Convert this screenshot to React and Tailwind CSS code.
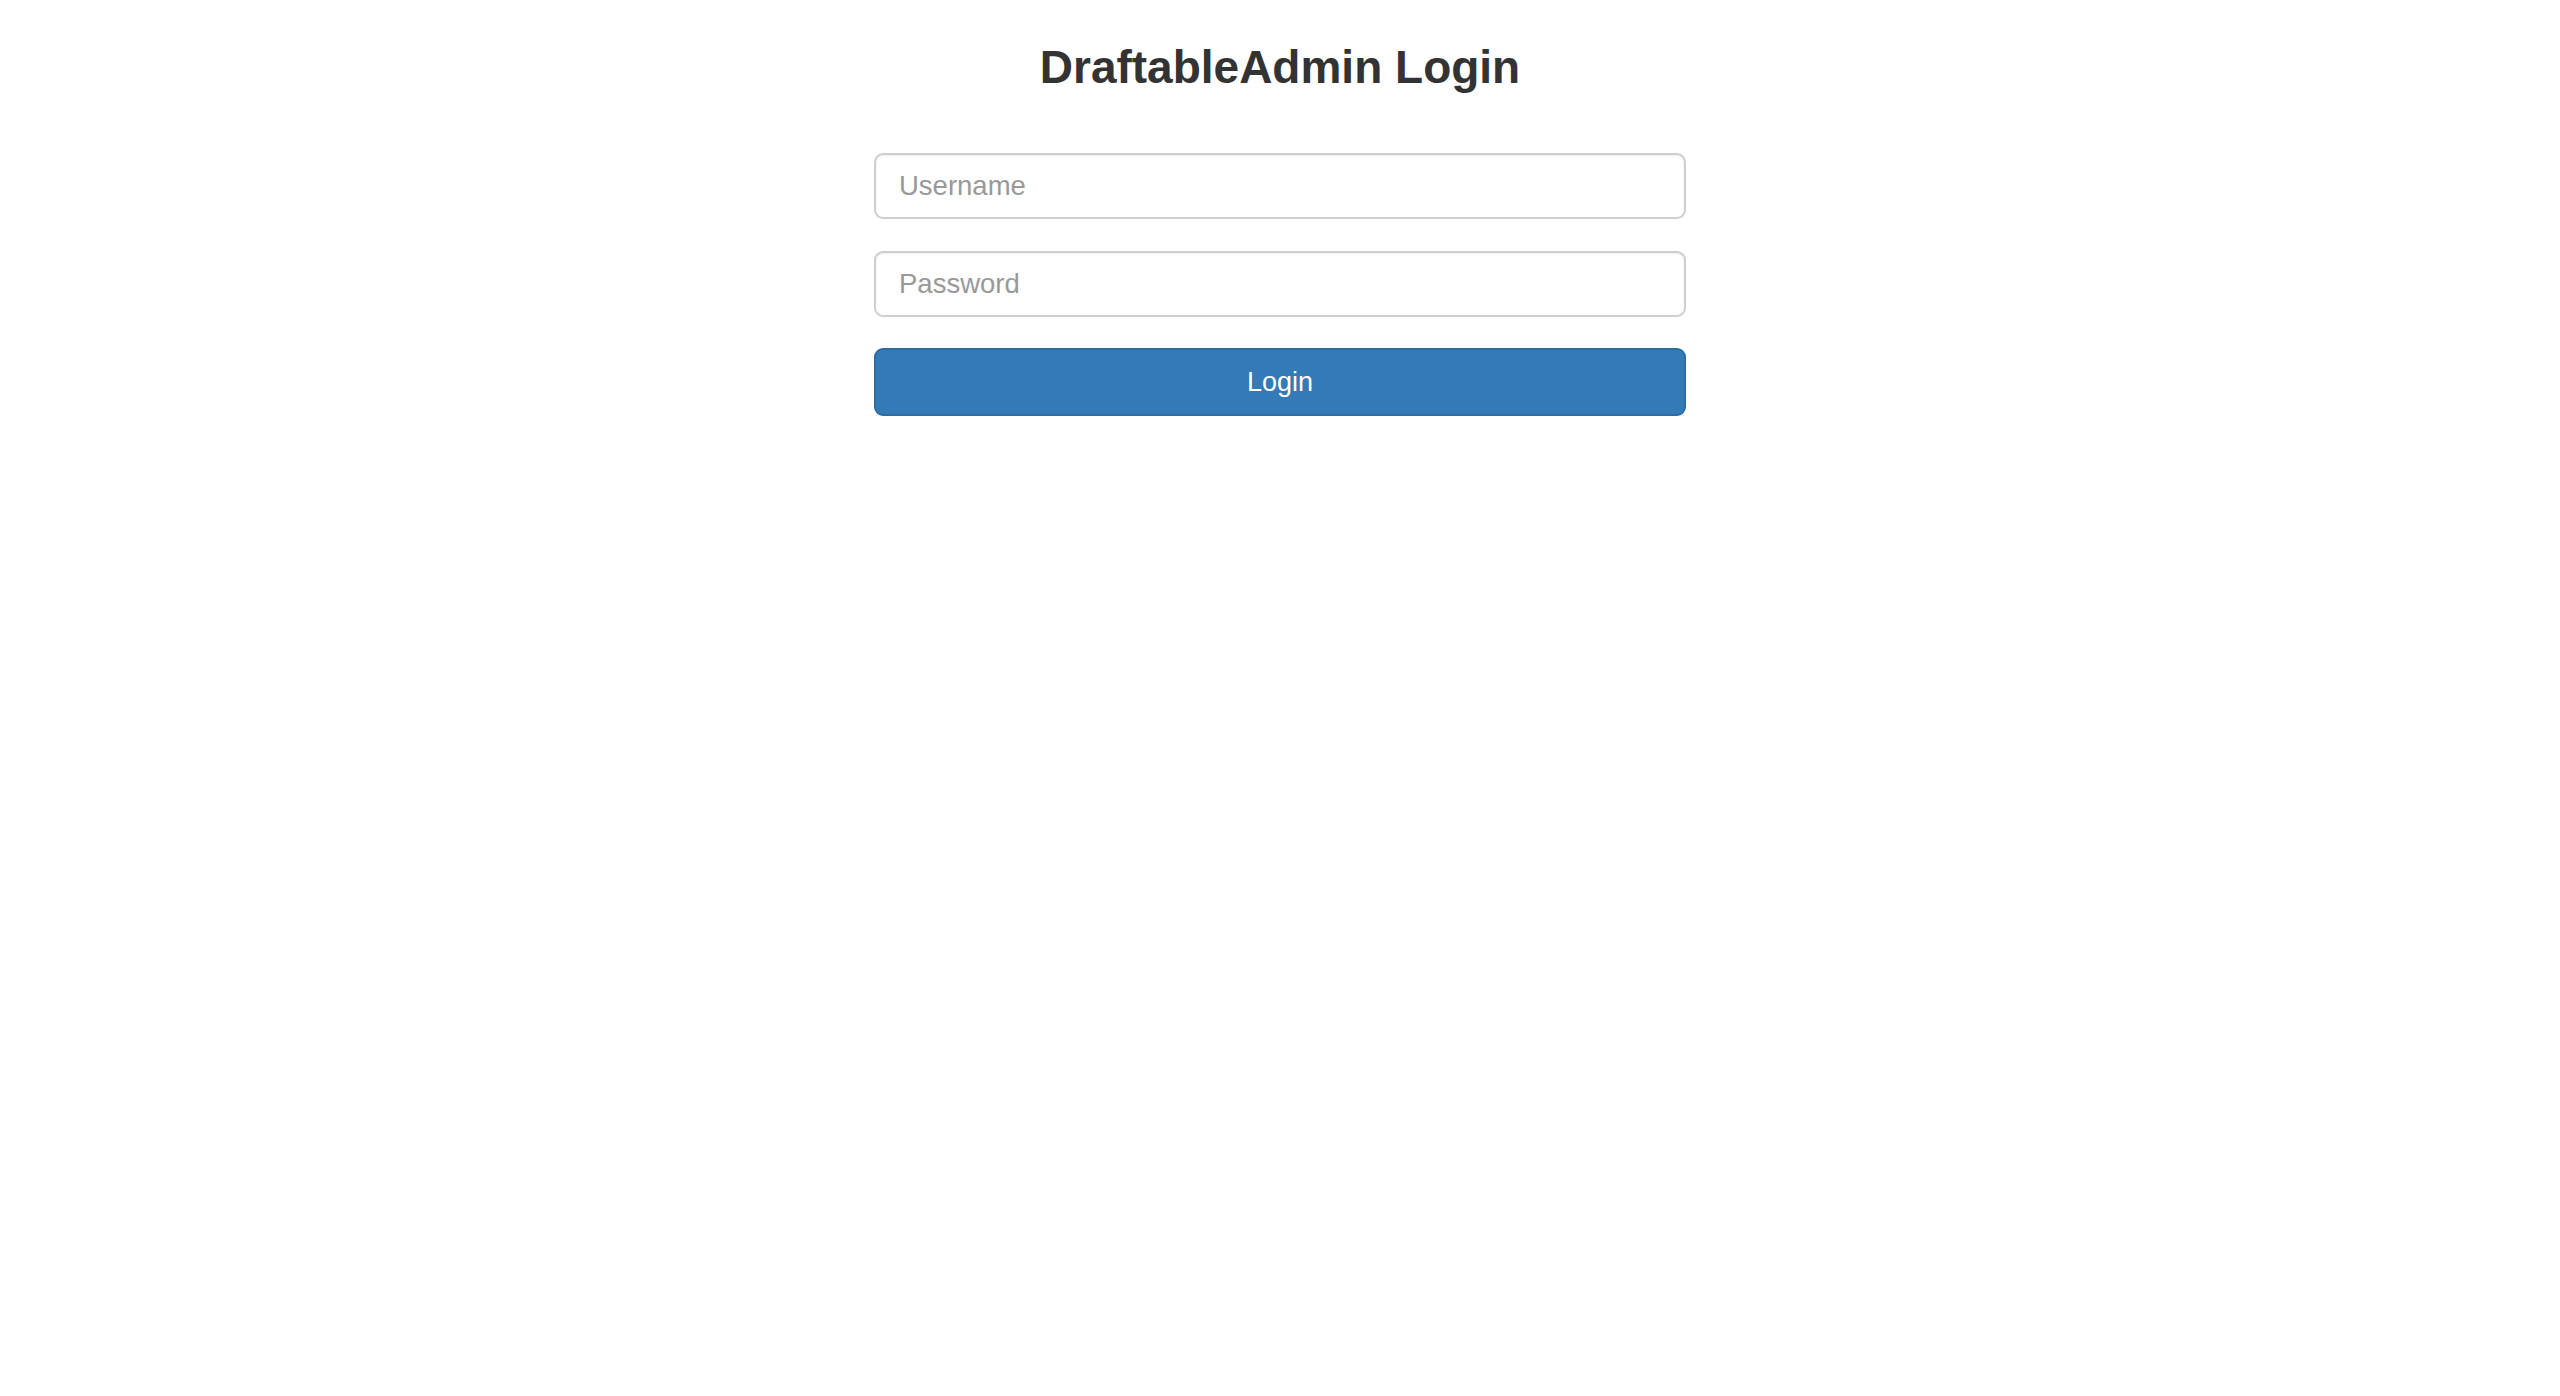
import React from "react";

export default function App() {
  return (
    <div className="min-h-[1396px] w-full bg-white font-['Liberation_Sans',Arial,sans-serif]">
      <div className="mx-auto flex w-[812px] flex-col">
        <h2 className="mt-[41px] h-[52px] text-center text-[46px] font-bold leading-[52px] text-[#333]">
          DraftableAdmin Login
        </h2>
        <form className="mt-[60px] flex flex-col" onSubmit={(e) => e.preventDefault()}>
          <input
            type="text"
            placeholder="Username"
            className="h-[66px] w-full rounded-[9px] border-2 border-[#cfcfcf] bg-white px-[23px] text-[27.5px] text-[#555] shadow-[inset_0_1px_2px_rgba(0,0,0,0.075)] outline-none placeholder:text-[#999]"
          />
          <input
            type="password"
            placeholder="Password"
            className="mt-[32px] h-[66px] w-full rounded-[9px] border-2 border-[#cfcfcf] bg-white px-[23px] text-[27.5px] text-[#555] shadow-[inset_0_1px_2px_rgba(0,0,0,0.075)] outline-none placeholder:text-[#999]"
          />
          <button
            type="submit"
            className="mt-[31px] h-[68px] w-full rounded-[9px] border-2 border-[#2e6da4] bg-[#337ab7] text-[27px] text-white"
          >
            Login
          </button>
        </form>
      </div>
    </div>
  );
}
